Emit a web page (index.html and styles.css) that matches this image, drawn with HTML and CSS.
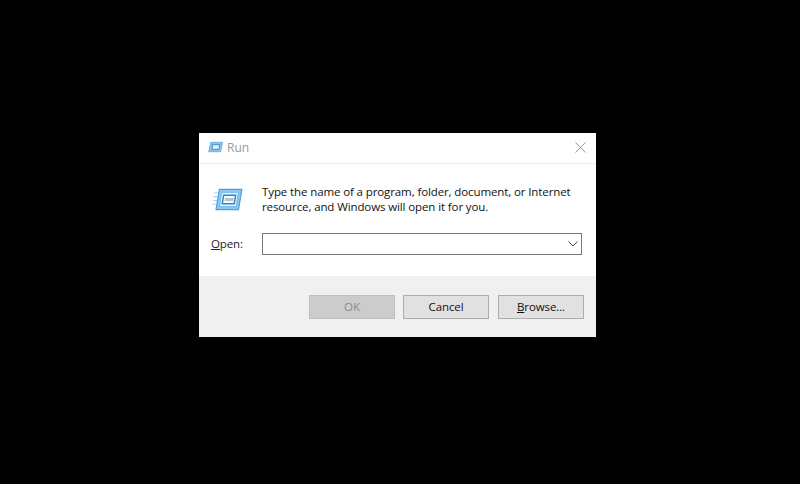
FILE: index.html
```html
<!DOCTYPE html>
<html lang="en">
<head>
<meta charset="utf-8">
<title>Run</title>
<link rel="stylesheet" href="styles.css">
</head>
<body>
<div class="window">
  <div class="titlebar">
    <svg class="title-icon" viewBox="0 0 16 12">
      <path d="M3 1H15.500L13.500 11H.8Z" fill="#8cc4ea" stroke="#6db0e2" stroke-width="1"/>
      <path d="M5 3.500H12.500L11.700 8.500H4.200Z" fill="#e6f3fc" stroke="#3f8fd0" stroke-width="1"/>
    </svg>
    <span class="title-text">Run</span>
    <svg class="close" viewBox="0 0 12 12"><path d="M.5.5L11.500 11.500M11.500.5L.5 11.500" stroke="#8c8c8c" stroke-width="1" fill="none"/></svg>
  </div>
  <div class="content">
    <div class="intro">
      <svg class="run-icon" viewBox="0 0 32 24">
        <path d="M2 5H7M1 9H6M1 13H5M0 17H4" stroke="#a9d5f2" stroke-width="1.200" fill="none"/>
        <path d="M7.500 1.500H31L27.500 22.500H4Z" fill="#8fc8ee" stroke="#4aa0de" stroke-width="1.200"/>
        <path d="M9.800 4.500H27.500L25 19.500H7.500Z" fill="#e3f2fc" stroke="#6db6e8" stroke-width="1"/>
        <path d="M12 7.500H24.500L23 16.500H10.500Z" fill="#f4faff" stroke="#2f86cc" stroke-width="1.500"/>
        <path d="M13.500 10.500H22.500L22 13.500H13Z" fill="#b4c4d2"/>
      </svg>
      <p class="message">Type the name of a program, folder, document, or Internet resource, and Windows will open it for you.</p>
    </div>
    <div class="open-row">
      <label class="open-label"><u>O</u>pen:</label>
      <div class="combo">
        <svg class="chevron" viewBox="0 0 10 6"><path d="M.5.5L5 5L9.500.5" stroke="#444" stroke-width="1" fill="none"/></svg>
      </div>
    </div>
  </div>
  <div class="footer">
    <div class="btn btn-disabled">OK</div>
    <div class="btn">Cancel</div>
    <div class="btn btn-browse"><span><u>B</u>rowse...</span></div>
  </div>
</div>
</body>
</html>
```
FILE: styles.css
```css
html, body {
  margin: 0;
  height: 100%;
  background: #000;
}
body {
  position: relative;
  overflow: hidden;
  font-family: "Open Sans", "Noto Sans", sans-serif;
  font-size: 11.5px;
  letter-spacing: -0.11px;
  color: #111;
}
.window {
  position: absolute;
  left: 199px;
  top: 133px;
  width: 397px;
  height: 204px;
  background: #fff;
  display: flex;
  flex-direction: column;
}
.titlebar {
  height: 31px;
  box-sizing: border-box;
  border-bottom: 1px solid #ececec;
  display: flex;
  align-items: center;
  padding: 0 10px 2px 9px;
  flex: none;
}
.title-icon {
  width: 15px;
  height: 12px;
}
.title-text {
  margin-left: 4px;
  color: #999;
  font-size: 12px;
  letter-spacing: 0;
}
.close {
  margin-left: auto;
  width: 11px;
  height: 11px;
}
.content {
  flex: 1;
  padding: 20px 14px 0 13px;
}
.intro {
  display: flex;
  align-items: flex-start;
}
.run-icon {
  width: 31px;
  height: 23px;
  margin-top: 4px;
  flex: none;
}
.message {
  margin: 0 0 0 19px;
  width: 320px;
  line-height: 15px;
  color: #111;
}
.open-row {
  display: flex;
  align-items: center;
  margin-top: 19px;
  margin-left: -1px;
}
.open-label {
  width: 51px;
  padding-bottom: 2px;
  color: #222;
}
.combo {
  width: 320px;
  height: 22px;
  box-sizing: border-box;
  border: 1px solid #7a7a7a;
  display: flex;
  align-items: center;
  justify-content: flex-end;
  padding-right: 3px;
}
.chevron {
  width: 10px;
  height: 6px;
}
.footer {
  flex: none;
  height: 61px;
  background: #f0f0f0;
  display: flex;
  justify-content: flex-end;
  align-items: flex-start;
  gap: 8px;
  padding: 19px 12px 0 0;
  box-sizing: border-box;
}
.btn {
  width: 86px;
  height: 24px;
  box-sizing: border-box;
  border: 1px solid #adadad;
  background: #e1e1e1;
  display: flex;
  align-items: center;
  justify-content: center;
  padding-bottom: 2px;
  color: #111;
}
.btn-browse {
  margin-left: 1px;
}
.btn-disabled {
  background: #cccccc;
  border-color: #bfbfbf;
  color: #8a8a8a;
}
```
